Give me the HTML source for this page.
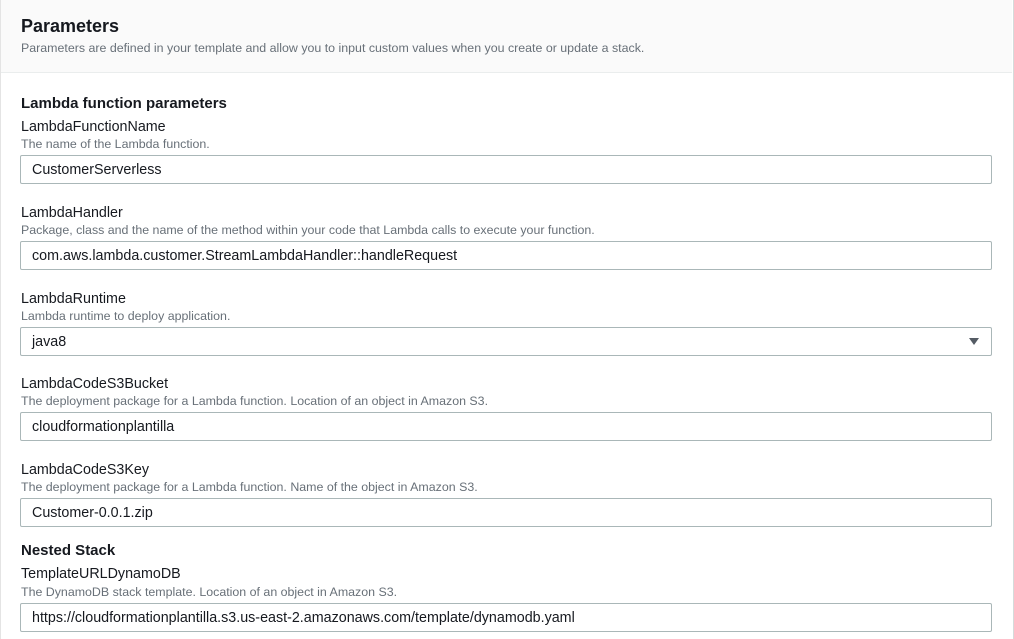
<!DOCTYPE html>
<html><head><style>
body{margin:0;width:1014px;height:639px;background:#fff;font-family:"Liberation Sans",sans-serif;color:#16191f;position:relative;overflow:hidden}
.frame{position:absolute;left:0;top:0;width:1012px;height:639px;border-left:1px solid #e4e4e4;border-right:2px solid #d5dbdb}
.hdr{position:absolute;left:1px;top:0;width:1011px;height:72px;background:#fafafa;border-bottom:1px solid #eaeded}
.a{position:absolute;left:21px;white-space:nowrap}
.t{font-size:18px;font-weight:bold}
.s{font-size:12.4px;color:#687078}
.h{font-size:15px;font-weight:bold}
.l{font-size:14.3px;color:#16191f}
.in{position:absolute;left:20px;width:970px;height:27px;border:1px solid #aab7b8;border-radius:2px;background:#fff;font-size:14.3px;line-height:29px;box-sizing:content-box}
.in span{position:absolute;left:11px}
.arr{position:absolute;right:12px;top:10px;width:0;height:0;border-left:5px solid transparent;border-right:5px solid transparent;border-top:7px solid #545b64}
</style></head><body>
<div class="frame"></div>
<div class="hdr"></div>
<div class="a t" style="top:16px">Parameters</div>
<div class="a s" style="top:41px">Parameters are defined in your template and allow you to input custom values when you create or update a stack.</div>
<div class="a h" style="top:95px">Lambda function parameters</div>
<div class="a l" style="top:119px">LambdaFunctionName</div>
<div class="a s" style="top:137px">The name of the Lambda function.</div>
<div class="in" style="top:155px"><span>CustomerServerless</span></div>
<div class="a l" style="top:205px">LambdaHandler</div>
<div class="a s" style="top:223px">Package, class and the name of the method within your code that Lambda calls to execute your function.</div>
<div class="in" style="top:241px"><span>com.aws.lambda.customer.StreamLambdaHandler::handleRequest</span></div>
<div class="a l" style="top:291px">LambdaRuntime</div>
<div class="a s" style="top:309px">Lambda runtime to deploy application.</div>
<div class="in" style="top:327px"><span>java8</span><div class="arr"></div></div>
<div class="a l" style="top:376px">LambdaCodeS3Bucket</div>
<div class="a s" style="top:394px">The deployment package for a Lambda function. Location of an object in Amazon S3.</div>
<div class="in" style="top:412px"><span>cloudformationplantilla</span></div>
<div class="a l" style="top:462px">LambdaCodeS3Key</div>
<div class="a s" style="top:480px">The deployment package for a Lambda function. Name of the object in Amazon S3.</div>
<div class="in" style="top:498px"><span>Customer-0.0.1.zip</span></div>
<div class="a h" style="top:542px">Nested Stack</div>
<div class="a l" style="top:566px">TemplateURLDynamoDB</div>
<div class="a s" style="top:585px">The DynamoDB stack template. Location of an object in Amazon S3.</div>
<div class="in" style="top:603px"><span>https://cloudformationplantilla.s3.us-east-2.amazonaws.com/template/dynamodb.yaml</span></div>
</body></html>
